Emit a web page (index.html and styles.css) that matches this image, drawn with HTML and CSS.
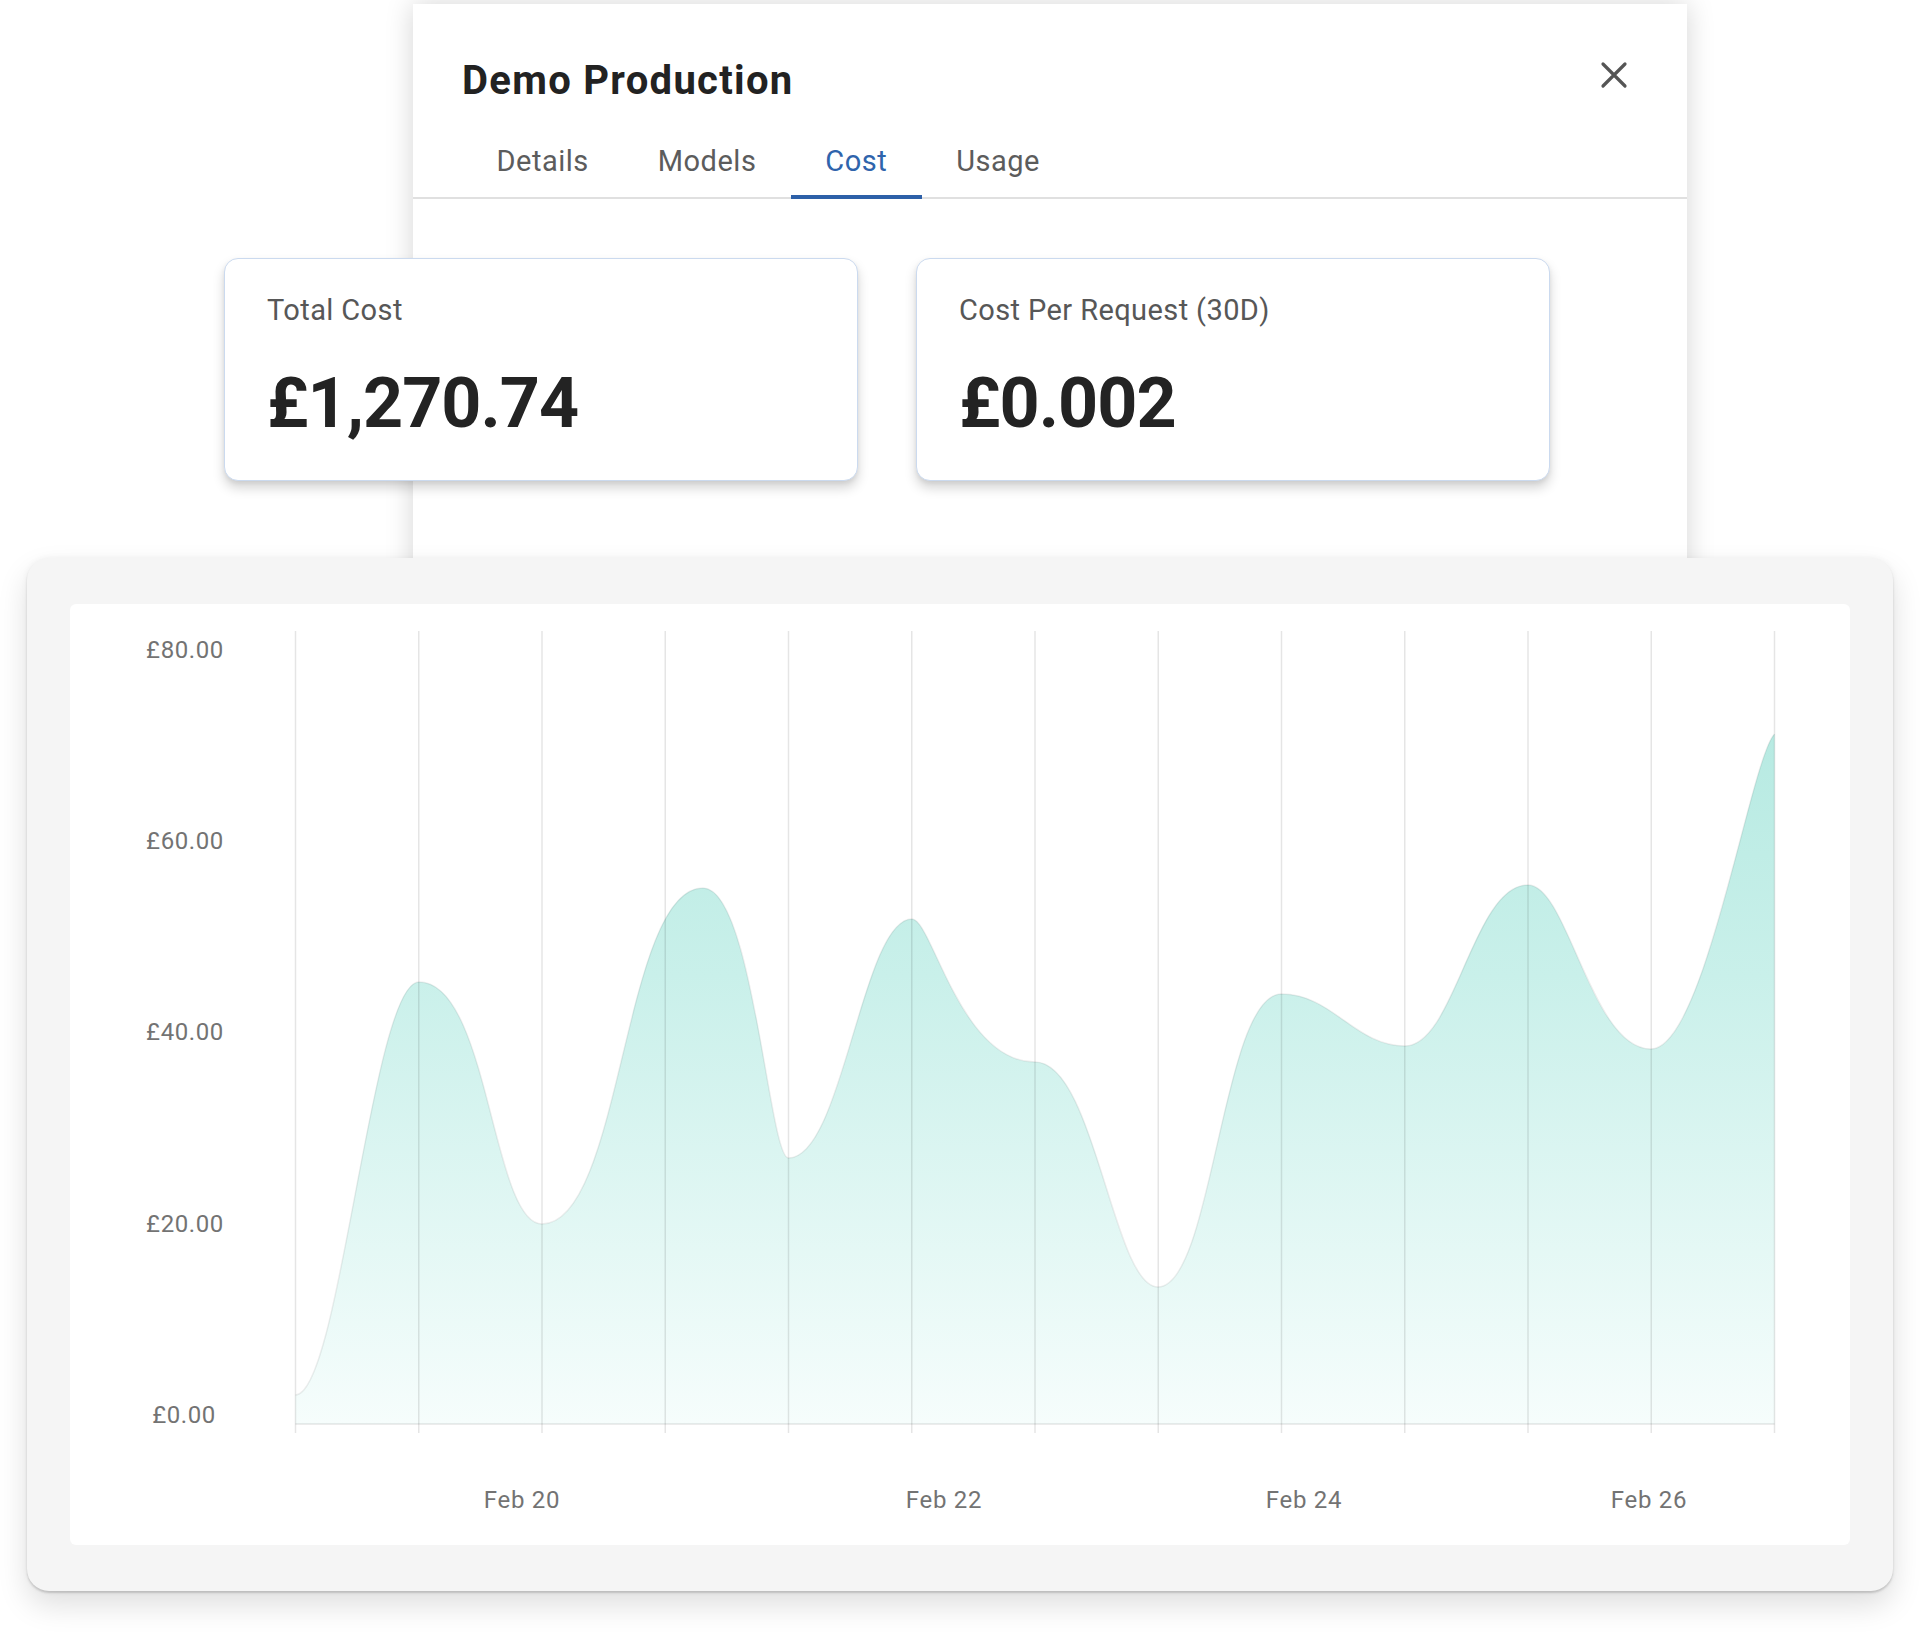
FILE: index.html
```html
<!DOCTYPE html>
<html lang="en">
<head>
<meta charset="utf-8">
<title>Demo Production – Cost</title>
<link rel="stylesheet" href="styles.css">
</head>
<body>
<div class="stage">
  <section class="modal">
    <header class="modal-head">
      <h1 class="modal-title">Demo Production</h1>
      <button class="close" aria-label="Close">
        <svg viewBox="0 0 28 28" width="28" height="28"><path d="M3 3 L25 25 M25 3 L3 25" stroke="#555" stroke-width="3.2" stroke-linecap="round" fill="none"/></svg>
      </button>
    </header>
    <nav class="tabs">
      <span class="tab">Details</span>
      <span class="tab">Models</span>
      <span class="tab active">Cost</span>
      <span class="tab">Usage</span>
    </nav>
  </section>

  <div class="cards">
    <div class="stat-card">
      <div class="stat-label">Total Cost</div>
      <div class="stat-value">£1,270.74</div>
    </div>
    <div class="stat-card">
      <div class="stat-label">Cost Per Request (30D)</div>
      <div class="stat-value">£0.002</div>
    </div>
  </div>

  <div class="chart-card">
    <div class="plot">
      <svg class="chart" width="1780" height="941" viewBox="70 604 1780 941">
        <defs>
          <linearGradient id="fill" x1="0" y1="734" x2="0" y2="1424" gradientUnits="userSpaceOnUse">
            <stop offset="0" stop-color="#b7eae2"/>
            <stop offset="0.35" stop-color="#c9f0ea"/>
            <stop offset="1" stop-color="#f6fdfc"/>
          </linearGradient>
        </defs>
        <path class="area" d="M295.5,1395 C340,1395 372,982 419,982 C489,982 492,1224 542,1224 C622,1224 623,888 703,888 C753,888 769,1158 788.5,1158 C843,1158 862,919 912,919 C932,919 960,1062 1035,1062 C1095,1062 1113,1287 1158,1287 C1213,1287 1222,994 1281.5,994 C1332,994 1355,1046 1405,1046 C1455,1046 1473,885 1528,885 C1568,885 1591,1049 1651,1049 C1705,1049 1750,760 1774.5,734 L1774.5,1424 L295.5,1424 Z"/>
        <path class="line" d="M295.5,1395 C340,1395 372,982 419,982 C489,982 492,1224 542,1224 C622,1224 623,888 703,888 C753,888 769,1158 788.5,1158 C843,1158 862,919 912,919 C932,919 960,1062 1035,1062 C1095,1062 1113,1287 1158,1287 C1213,1287 1222,994 1281.5,994 C1332,994 1355,1046 1405,1046 C1455,1046 1473,885 1528,885 C1568,885 1591,1049 1651,1049 C1705,1049 1750,760 1774.5,734"/>
        <g class="grid">
          <line x1="295.5" y1="631" x2="295.5" y2="1433"/>
          <line x1="418.75" y1="631" x2="418.75" y2="1433"/>
          <line x1="542" y1="631" x2="542" y2="1433"/>
          <line x1="665.25" y1="631" x2="665.25" y2="1433"/>
          <line x1="788.5" y1="631" x2="788.5" y2="1433"/>
          <line x1="911.75" y1="631" x2="911.75" y2="1433"/>
          <line x1="1035" y1="631" x2="1035" y2="1433"/>
          <line x1="1158.25" y1="631" x2="1158.25" y2="1433"/>
          <line x1="1281.5" y1="631" x2="1281.5" y2="1433"/>
          <line x1="1404.75" y1="631" x2="1404.75" y2="1433"/>
          <line x1="1528" y1="631" x2="1528" y2="1433"/>
          <line x1="1651.25" y1="631" x2="1651.25" y2="1433"/>
          <line x1="1774.5" y1="631" x2="1774.5" y2="1433"/>
          <line x1="295.5" y1="1424" x2="1774.5" y2="1424"/>
        </g>
        <g class="ylabels">
          <text x="185" y="658">£80.00</text>
          <text x="185" y="849">£60.00</text>
          <text x="185" y="1040">£40.00</text>
          <text x="185" y="1232">£20.00</text>
          <text x="184" y="1423">£0.00</text>
        </g>
        <g class="xlabels">
          <text x="522" y="1508">Feb 20</text>
          <text x="944" y="1508">Feb 22</text>
          <text x="1304" y="1508">Feb 24</text>
          <text x="1649" y="1508">Feb 26</text>
        </g>
      </svg>
    </div>
  </div>
</div>
</body>
</html>
```

FILE: styles.css
```css
* { box-sizing: border-box; }

html, body {
  margin: 0;
  padding: 0;
  background: #ffffff;
}

body {
  font-family: Roboto, "Liberation Sans", Arial, sans-serif;
  color: #222;
}

.stage {
  position: relative;
  width: 1920px;
  height: 1637px;
  overflow: hidden;
  display: flex;
  flex-direction: column;
  align-items: flex-start;
}

/* Background window */
.modal {
  position: absolute;
  left: 413px;
  top: 4px;
  width: 1274px;
  height: 620px;
  background: #fff;
  box-shadow: 0 0 26px rgba(0, 0, 0, 0.17);
  z-index: 0;
}

.modal-head {
  display: flex;
  justify-content: space-between;
  align-items: flex-start;
  padding: 54px 59px 0 49px;
}

.modal-title {
  margin: 0;
  font-size: 40px;
  line-height: 46px;
  font-weight: 700;
  letter-spacing: 1.3px;
  color: #222;
}

.close {
  border: 0;
  background: none;
  padding: 0;
  margin-top: 3px;
  width: 28px;
  height: 28px;
  display: block;
}
.close svg { display: block; }

.tabs {
  display: flex;
  margin-top: 40px;
  padding-left: 49px;
  border-bottom: 2px solid #e0e0e0;
}

.tab {
  font-size: 29px;
  line-height: 34px;
  letter-spacing: 0.5px;
  padding: 0 34.5px 17px;
  color: #5c5c5c;
  border-bottom: 4px solid transparent;
  margin-bottom: -2px;
}

.tab.active {
  color: #2f64ac;
  border-bottom-color: #2d60a8;
}

/* Stat cards */
.cards {
  position: relative;
  z-index: 1;
  display: flex;
  gap: 58px;
  margin: 258px 0 0 224px;
}

.stat-card {
  width: 634px;
  height: 223px;
  background: #fff;
  border: 1.5px solid #cbdaef;
  border-radius: 14px;
  box-shadow: 0 7px 12px rgba(0, 0, 0, 0.17), 0 2px 4px rgba(0, 0, 0, 0.06);
  padding: 34px 40px 0 42px;
}

.stat-label {
  font-size: 29px;
  line-height: 34px;
  letter-spacing: 0.4px;
  color: #575757;
}

.stat-value {
  margin-top: 36px;
  font-size: 70px;
  line-height: 80px;
  font-weight: 700;
  letter-spacing: -1px;
  color: #232323;
}

/* Chart card */
.chart-card {
  position: relative;
  z-index: 2;
  margin: 77px 0 0 27px;
  width: 1866px;
  height: 1033px;
  padding: 46px 43px;
  background: #f5f5f5;
  border-radius: 22px;
  box-shadow: 0 2px 2px rgba(0, 0, 0, 0.15), 0 14px 30px rgba(0, 0, 0, 0.13), 0 0 6px rgba(0, 0, 0, 0.05);
}

.plot {
  width: 1780px;
  height: 941px;
  background: #fff;
  border-radius: 6px;
}

.chart { display: block; }

.area { fill: url(#fill); }

.line {
  fill: none;
  stroke: rgba(0, 0, 0, 0.07);
  stroke-width: 1.5;
}

.grid line {
  stroke: rgba(0, 0, 0, 0.1);
  stroke-width: 1.5;
}

.ylabels text,
.xlabels text {
  font-family: Roboto, "Liberation Sans", Arial, sans-serif;
  font-size: 24px;
  fill: #737373;
  text-anchor: middle;
}

.ylabels text { letter-spacing: 0.6px; }
.xlabels text { letter-spacing: 0.7px; }
```
